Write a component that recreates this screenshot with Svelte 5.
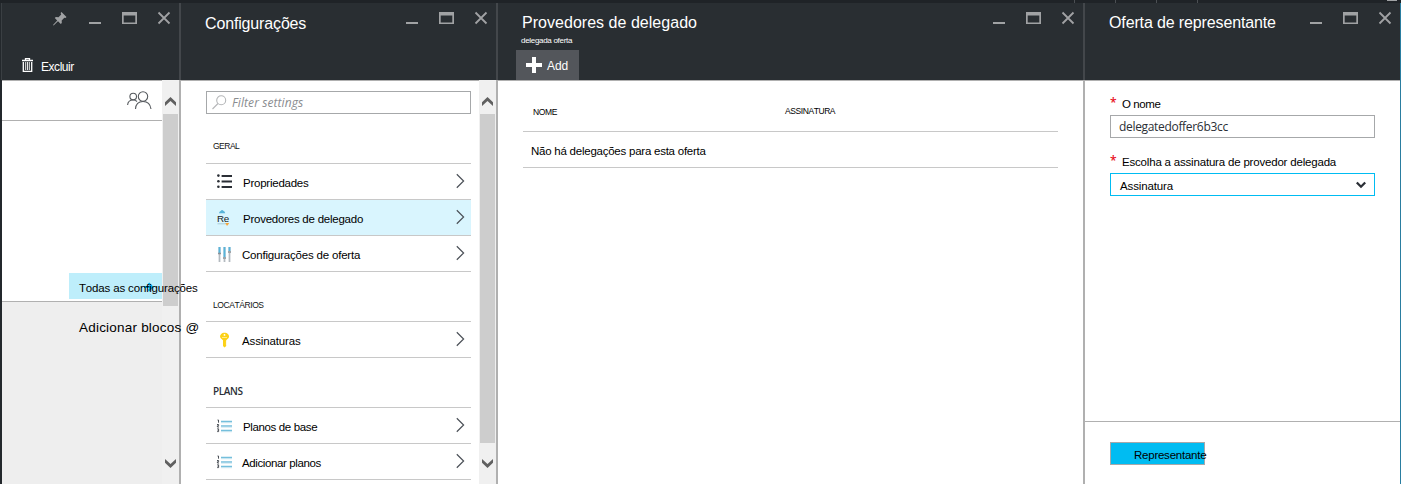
<script>
  const groups = [
    { label: 'GERAL', ls: -0.5, items: [
      { text: 'Propriedades', icon: 'list', x: 37, ls: -0.24 },
      { text: 'Provedores de delegado', icon: 'reseller', x: 37, ls: -0.24, active: true },
      { text: 'Configurações de oferta', icon: 'sliders', x: 36, ls: -0.2 }
    ] },
    { label: 'LOCATÁRIOS', ls: -0.42, items: [
      { text: 'Assinaturas', icon: 'key', x: 36, ls: -0.14 }
    ] },
    { label: 'PLANS', ls: -0.4, segoe: true, items: [
      { text: 'Planos de base', icon: 'plans', x: 37, ls: -0.36 },
      { text: 'Adicionar planos', icon: 'plans', x: 36, ls: -0.38 }
    ] }
  ];
</script>

{#snippet controls(pinned)}
  <div class="controls">
    {#if pinned}
      <svg class="pin" width="14" height="14" viewBox="0 0 14 14"><path d="M8.5 0 13.5 5 12.5 6 11.3 5.7 8.7 8.4 8.8 11 7.8 12 5 9.2 0.6 13.4 0 13 4.2 8.4 1.8 6 2.8 5 5.5 5.2 8.2 2.6 7.6 1Z" fill="#a0a2a4" /></svg>
    {/if}
    <svg width="12" height="12" viewBox="0 0 12 12"><path d="M0 11H12" stroke="#a0a2a4" stroke-width="2" /></svg>
    <svg width="15" height="12" viewBox="0 0 15 12"><path d="M0 0H15V12H0ZM1.7 3.6V10.4H13.3V3.6Z" fill="#a0a2a4" fill-rule="evenodd" /></svg>
    <svg width="12" height="12" viewBox="0 0 12 12"><path d="M.5.5 11.5 11.5M11.5.5.5 11.5" stroke="#a0a2a4" stroke-width="1.8" /></svg>
  </div>
{/snippet}

{#snippet scrollbar(thumb)}
  <div class="scrollbar">
    <svg class="up" width="11" height="9" viewBox="0 0 11 9"><path d="M0 9V5.2L5.5 0 11 5.2V9L5.5 4Z" fill="#606060" /></svg>
    <div class="thumb" style="height: {thumb}px"></div>
    <svg class="down" width="11" height="9" viewBox="0 0 11 9"><path d="M0 0V3.8L5.5 9 11 3.8V0L5.5 5Z" fill="#606060" /></svg>
  </div>
{/snippet}

{#snippet icon(name)}
  {#if name === 'list'}
    <svg width="15" height="15" viewBox="0 0 15 15" fill="#2b2f36"><path d="M4.6 1H15V3H4.6ZM4.6 6.5H15V8.5H4.6ZM4.6 12H15V14H4.6Z" /><circle cx="1.4" cy="1.6" r="1.3" /><circle cx="1.4" cy="7.2" r="1.3" /><circle cx="1.4" cy="12.8" r="1.3" /></svg>
  {:else if name === 'reseller'}
    <svg width="15" height="17" viewBox="0 0 15 17"><path d="M2 4.2Q2.3 2.3 3.7 2Q5 .2 6.6 2Q8 2.3 8.2 4.2Z" fill="#59b4d9" /><path d="M.5 14.8H9" stroke="#a8cbd7" /><path d="M8.4 14H12.2L10.6 16.4H9.6Z" fill="#f8a63a" /><text x="0" y="13" font-size="9.8" letter-spacing="-.3" font-family="Liberation Sans, Arial, sans-serif" fill="#161c23">Re</text></svg>
  {:else if name === 'sliders'}
    <svg width="15" height="16" viewBox="0 0 15 16"><path d="M1 1H4V16H1ZM6 1H9V16H6ZM11 1H14V16H11Z" fill="#e2e5e8" /><path d="M2.5 1V7M7.5 1V11M12.5 1V5" stroke="#59b4d9" stroke-width="2" /><path d="M2.5 8V16M7.5 13V16M12.5 7V16" stroke="#b4babf" /><path d="M1 7.5H4M6 12H9M11 6H14" stroke="#8b9197" stroke-width="1.3" /></svg>
  {:else if name === 'key'}
    <svg width="15" height="16" viewBox="0 0 15 16"><path d="M7.5.8C9 .8 10 1.3 11.1 2.2 12.4 3.5 12.3 5.5 11.1 6.5L9.2 8.2V9.5L8.6 10 9.2 10.6V11.4L8.6 12 9.2 12.6V14L7.5 15.6 6 14V8.2L4 6.5C2.7 5.4 2.7 3.5 4 2.2 5 1.3 6 .8 7.5.8Z" fill="#fcd116" /><circle cx="7.5" cy="2.9" r=".9" fill="#fff" /><path d="M5 5.5H10" stroke="#fff0a3" stroke-width=".8" /></svg>
  {:else}
    <svg width="16" height="14" viewBox="0 0 16 14"><path d="M4 2.5H15M4 7H15M4 11.5H15" stroke="#75bfdc" stroke-width="1.5" /><path d="M4 3.7H15M4 8.2H15M4 12.7H15" stroke="#b9e0ee" stroke-width=".7" /><path d="M.5 1H1.5V3.7M0 5.5H1.6V6.8H.4V8H2M.2 9.8H1.6V12.6H.2M.5 11.2H1.5" fill="none" stroke="#4b5057" stroke-width="1" /></svg>
  {/if}
{/snippet}

<div class="portal">
  <div class="topbar"><i></i><i></i><i></i><i></i><b></b></div>
  <div class="blades">
    <section class="blade">
      <header>
        {@render controls(true)}
        <div class="command">
          <svg width="11" height="14" viewBox="0 0 11 14"><path d="M3.5 2V.6H7.5V2M0 2.5H11M1.3 4V13.3H9.7V4" fill="none" stroke="#fff" stroke-width="1.3" /><path d="M3.7 4V12M5.5 4V12M7.3 4V12" stroke="#fff" stroke-width=".9" /></svg>
          <span class="delete">Excluir</span>
        </div>
      </header>
      <div class="body">
        <div class="summary">
          <div class="people">
            <svg width="25" height="19" viewBox="0 0 25 19" fill="none" stroke="#55595d" stroke-width="1.1"><circle cx="16" cy="5.5" r="4.7" /><path d="M8.5 18Q9 10.5 16 10.5T24 18" /><circle cx="6.2" cy="5.5" r="3.3" /><path d="M.6 14Q1 9 6.2 9Q8.6 9 10 10.5" /></svg>
          </div>
          <div class="lens">
            <div class="all-settings">
              <span>Todas as configurações</span>
              <svg width="12" height="10" viewBox="0 0 12 10"><path d="M1 5H8M5.5 1.2 9.3 5 5.5 8.8" fill="none" stroke="#00abec" stroke-width="2" /></svg>
            </div>
          </div>
          <div class="tiles"><span>Adicionar blocos @</span></div>
        </div>
        {@render scrollbar(192)}
      </div>
    </section>

    <section class="blade">
      <header>
        <h1 class="settings-title">Configurações</h1>
        {@render controls(false)}
      </header>
      <div class="body">
        <div class="settings">
          <div class="search">
            <svg width="15" height="15" viewBox="0 0 15 15" fill="none" stroke="#b4b6b8" stroke-width="1.1"><circle cx="9.2" cy="5.2" r="4.5" /><path d="M6 8.5.5 14" /></svg>
            <span>Filter settings</span>
          </div>
          {#each groups as group, i}
            <h2 class:first={i === 0} class:segoe={group.segoe} style="letter-spacing: {group.ls}px">{group.label}</h2>
            {#each group.items as item}
              <div class="item" class:active={item.active}>
                <span class="icon" style="width: {item.x - 11}px">{@render icon(item.icon)}</span>
                <span class="name" style="letter-spacing: {item.ls}px">{item.text}</span>
                <svg class="chevron" width="9" height="16" viewBox="0 0 9 16"><path d="M.8 1.3 7.6 8 .8 14.7" fill="none" stroke="#4b5057" stroke-width="1.2" /></svg>
              </div>
            {/each}
          {/each}
        </div>
        {@render scrollbar(329)}
      </div>
    </section>

    <section class="blade">
      <header>
        <h1>Provedores de delegado</h1>
        <p class="subtitle">delegada oferta</p>
        {@render controls(false)}
        <div class="add">
          <svg width="16" height="16" viewBox="0 0 16 16"><path d="M8 0V16M0 8H16" stroke="#fff" stroke-width="4" /></svg>
          <span>Add</span>
        </div>
      </header>
      <div class="body">
        <div class="table">
          <div class="thead"><span>NOME</span><span class="sub">ASSINATURA</span></div>
          <div class="row">Não há delegações para esta oferta</div>
        </div>
      </div>
    </section>

    <section class="blade">
      <header>
        <h1 class="offer-title">Oferta de representante</h1>
        {@render controls(false)}
      </header>
      <div class="body form">
        <div class="fields">
          <div class="label"><em>*</em><span class="tight">O nome</span></div>
          <div class="field"><span class="value">delegatedoffer6b3cc</span></div>
          <div class="label second"><em>*</em><span class="loose">Escolha a assinatura de provedor delegada</span></div>
          <div class="field select">
            <span>Assinatura</span>
            <svg width="10" height="8" viewBox="0 0 10 8"><path d="M.8 1.5 5 5.7 9.2 1.5" fill="none" stroke="#2b2f36" stroke-width="2.3" /></svg>
          </div>
        </div>
        <footer><div class="submit">Representante</div></footer>
      </div>
    </section>
  </div>
</div>

<style>
  * { box-sizing: border-box; }
  svg { display: block; flex: none; overflow: visible; }
  h1, h2, p { margin: 0; font-weight: 400; }
  .portal { width: 1401px; height: 484px; overflow: hidden; display: flex; flex-direction: column; background: #23282c; color: #000; font: 11.5px/12px "Liberation Sans", Arial, sans-serif; letter-spacing: -.24px; font-kerning: none; white-space: nowrap; }
  .topbar { height: 3px; flex: none; display: flex; gap: 40px; padding-left: 1074px; background: #1f2327; }
  .topbar i { width: 1px; background: #4b4f53; }
  .topbar b { width: 10px; height: 1px; margin-left: 149px; background: #a0a2a4; }
  .blades { flex: 1; display: grid; grid-template-columns: 179px 317px 587px 317px; background: linear-gradient(to right, transparent 1400px, #2a7da0 1400px); }
  .blade { display: flex; flex-direction: column; height: 481px; border-left: 2px solid #b0b0b0; min-width: 0; }
  .blade:first-child { border-left-color: #23282c; }
  header { position: relative; height: 77px; margin-left: -2px; padding-left: 26px; flex: none; background: #292e32; border-left: 2px solid #43474b; }
  .blade:first-child header { border-left: 1px solid #3a3f43; margin-left: -1px; }
  h1 { color: #fff; font-size: 16px; line-height: 18px; padding-top: 11px; letter-spacing: .03px; margin-left: -2px; }
  .settings-title { padding-top: 12px; letter-spacing: -.15px; }
  .offer-title { letter-spacing: -.13px; }
  .subtitle { color: #fff; font-size: 8px; line-height: 10px; padding-top: 4px; margin-left: -3px; letter-spacing: -.3px; }
  .controls { position: absolute; top: 9px; right: 9px; display: flex; gap: 21px; }
  .controls .pin { margin-right: 1px; }
  .command { height: 77px; display: flex; gap: 8px; padding-top: 55px; margin-left: -6px; color: #fff; }
  .command .delete { font-size: 12px; line-height: 14px; padding-top: 2px; letter-spacing: -.45px; }
  .add { width: 63px; height: 30px; margin: 4px 0 0 -8px; padding: 7px 0 0 10px; display: flex; gap: 5px; background: #53565b; color: #fff; font-size: 12px; line-height: 14px; }
  .add span { padding-top: 2px; letter-spacing: -.05px; }
  .body { flex: 1; display: flex; min-height: 0; background: #fff; border-top: 1px solid #b0b0b0; }
  .scrollbar { width: 17px; flex: none; display: flex; flex-direction: column; align-items: center; background: #f0f0f0; margin-top: -1px; }
  .scrollbar .up { margin: 17px 0 8px; }
  .thumb { width: 15px; background: #cdcdcd; }
  .scrollbar .down { margin: auto 0 16px; }
  .summary { position: relative; z-index: 1; width: 160px; display: flex; flex-direction: column; }
  .people { height: 40px; padding: 10px 10px 0 0; display: flex; justify-content: flex-end; border-bottom: 1px solid #b0b0b0; }
  .lens { height: 181px; display: flex; justify-content: flex-end; align-items: flex-end; padding-bottom: 2px; border-bottom: 1px solid #b0b0b0; }
  .all-settings { position: relative; width: 93px; height: 26px; padding: 9px 0 0 10px; background: #beeefb; letter-spacing: -.16px; }
  .all-settings span { position: relative; z-index: 1; }
  .all-settings svg { position: absolute; left: 74px; top: 9px; }
  .tiles { flex: 1; padding: 18px 0 0 77px; background: #eee; font-size: 13.5px; line-height: 15px; letter-spacing: .21px; }
  .settings { flex: 1; padding: 10px 8px 0 25px; overflow: hidden; }
  .search { height: 23px; border: 1px solid #a6a8aa; display: flex; padding: 3px 0 0 5px; gap: 5px; }
  .search span { color: #8a8c8f; font: italic 12px/16px "Open Sans", sans-serif; letter-spacing: .08px; }
  h2 { height: 50px; padding: 29px 0 0 7px; border-bottom: 1px solid #c8c8c8; font-size: 8.5px; line-height: 9px; color: #111; }
  h2.first { padding-top: 28px; }
  h2.segoe { font-family: "Open Sans", sans-serif; font-size: 10px; line-height: 10px; font-weight: 600; padding-top: 28px; color: #2b2f36; }
  .item { height: 36px; display: flex; align-items: center; padding: 0 6px 0 11px; border-bottom: 1px solid #c8c8c8; }
  .item.active { background: #d9f5fe; }
  .item .name { flex: 1; padding-top: 3px; }
  .item .chevron { margin-bottom: 1px; }
  .table { flex: 1; padding: 0 25px; }
  .thead { height: 51px; display: grid; grid-template-columns: 252px 1fr; padding: 26px 0 0 10px; border-bottom: 1px solid #c8c8c8; font-size: 8.5px; line-height: 10px; letter-spacing: -.38px; }
  .thead .sub { margin-top: -1px; letter-spacing: -.42px; }
  .row { height: 36px; padding: 13px 0 0 8px; border-bottom: 1px solid #c8c8c8; }
  .form { flex-direction: column; }
  .fields { flex: 1; padding: 17px 25px 0; }
  .label { height: 17px; display: flex; }
  .label.second { margin-top: 18px; }
  .label em { width: 12px; flex: none; margin-top: -2px; color: #e81123; font: 600 12px/14px "Open Sans", sans-serif; }
  .tight { letter-spacing: -.42px; }
  .loose { letter-spacing: -.19px; }
  .field { height: 23px; border: 1px solid #a6a8aa; padding: 3px 8px 0; display: flex; justify-content: space-between; }
  .value { font: 12px/16px "Open Sans", sans-serif; letter-spacing: -.32px; color: #2b2f36; }
  .select { border-color: #00bcf2; padding: 6px 8px 0 9px; letter-spacing: -.13px; }
  .select svg { margin-top: 1px; }
  footer { height: 63px; padding: 20px 25px; border-top: 1px solid #b0b0b0; }
  .submit { width: 95px; height: 23px; padding: 6px 0 0 23px; border: 1px solid #a6a8aa; background: #00bcf2; }
</style>
